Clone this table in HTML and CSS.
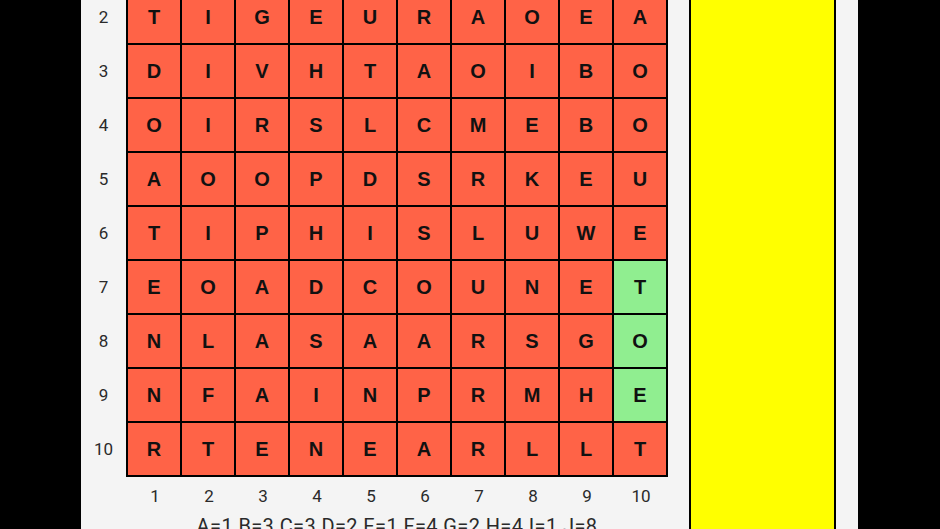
FILE: index.html
```html
<!DOCTYPE html>
<html>
<head>
<meta charset="utf-8">
<link rel="stylesheet" href="styles.css">
</head>
<body>
<div class="panel">
  <div class="left">
    <div class="board">
      <div class="rowlabels">
        <div class="rl">2</div><div class="rl">3</div><div class="rl">4</div><div class="rl">5</div><div class="rl">6</div>
        <div class="rl">7</div><div class="rl">8</div><div class="rl">9</div><div class="rl">10</div>
      </div>
      <div class="grid">
        <div class="c">T</div><div class="c">I</div><div class="c">G</div><div class="c">E</div><div class="c">U</div><div class="c">R</div><div class="c">A</div><div class="c">O</div><div class="c">E</div><div class="c">A</div>
        <div class="c">D</div><div class="c">I</div><div class="c">V</div><div class="c">H</div><div class="c">T</div><div class="c">A</div><div class="c">O</div><div class="c">I</div><div class="c">B</div><div class="c">O</div>
        <div class="c">O</div><div class="c">I</div><div class="c">R</div><div class="c">S</div><div class="c">L</div><div class="c">C</div><div class="c">M</div><div class="c">E</div><div class="c">B</div><div class="c">O</div>
        <div class="c">A</div><div class="c">O</div><div class="c">O</div><div class="c">P</div><div class="c">D</div><div class="c">S</div><div class="c">R</div><div class="c">K</div><div class="c">E</div><div class="c">U</div>
        <div class="c">T</div><div class="c">I</div><div class="c">P</div><div class="c">H</div><div class="c">I</div><div class="c">S</div><div class="c">L</div><div class="c">U</div><div class="c">W</div><div class="c">E</div>
        <div class="c">E</div><div class="c">O</div><div class="c">A</div><div class="c">D</div><div class="c">C</div><div class="c">O</div><div class="c">U</div><div class="c">N</div><div class="c">E</div><div class="c sel">T</div>
        <div class="c">N</div><div class="c">L</div><div class="c">A</div><div class="c">S</div><div class="c">A</div><div class="c">A</div><div class="c">R</div><div class="c">S</div><div class="c">G</div><div class="c sel">O</div>
        <div class="c">N</div><div class="c">F</div><div class="c">A</div><div class="c">I</div><div class="c">N</div><div class="c">P</div><div class="c">R</div><div class="c">M</div><div class="c">H</div><div class="c sel">E</div>
        <div class="c">R</div><div class="c">T</div><div class="c">E</div><div class="c">N</div><div class="c">E</div><div class="c">A</div><div class="c">R</div><div class="c">L</div><div class="c">L</div><div class="c">T</div>
      </div>
    </div>
    <div class="collabels">
      <div>1</div><div>2</div><div>3</div><div>4</div><div>5</div><div>6</div><div>7</div><div>8</div><div>9</div><div>10</div>
    </div>
    <div class="legend">A=1 B=3 C=3 D=2 E=1 F=4 G=2 H=4 I=1 J=8</div>
  </div>
  <div class="yellow"></div>
</div>
</body>
</html>
```

FILE: styles.css
```css
html, body {
  margin: 0;
  padding: 0;
  background: #000;
  height: 100%;
  overflow: hidden;
}

.panel {
  margin-left: 81px;
  width: 777px;
  height: 529px;
  background: #f4f4f4;
  display: flex;
  overflow: hidden;
}

.left {
  display: flex;
  flex-direction: column;
  margin-top: -11px;
  width: 608px;
}

.board {
  display: flex;
}

.rowlabels {
  width: 45px;
  padding-top: 2px;
  display: flex;
  flex-direction: column;
  gap: 2px;
}

.rl {
  height: 52px;
  display: flex;
  align-items: center;
  justify-content: center;
  font-family: Roboto, "Liberation Sans", sans-serif;
  font-size: 17px;
  color: #2a2a2a;
}

.grid {
  display: grid;
  grid-template-columns: repeat(10, 52px);
  grid-auto-rows: 52px;
  gap: 2px;
  padding: 2px;
  background: #000;
}

.c {
  background: #ff6347;
  display: flex;
  align-items: center;
  justify-content: center;
  font-family: "Liberation Sans", Arial, sans-serif;
  font-weight: bold;
  font-size: 20px;
  color: #111;
}

.c.sel {
  background: #90ee90;
}

.collabels {
  margin-left: 47px;
  display: grid;
  grid-template-columns: repeat(10, 54px);
  height: 38px;
  line-height: 38px;
  text-align: center;
  font-family: Roboto, "Liberation Sans", sans-serif;
  font-size: 17px;
  color: #2a2a2a;
}

.legend {
  margin-left: 45px;
  width: 542px;
  text-align: center;
  font-family: Roboto, "Liberation Sans", sans-serif;
  font-size: 20px;
  letter-spacing: 0.4px;
  color: #2a2a2a;
  line-height: 22px;
}

.yellow {
  width: 143px;
  height: 100%;
  background: #ffff00;
  border-left: 2px solid #000;
  border-right: 2px solid #000;
}
```
